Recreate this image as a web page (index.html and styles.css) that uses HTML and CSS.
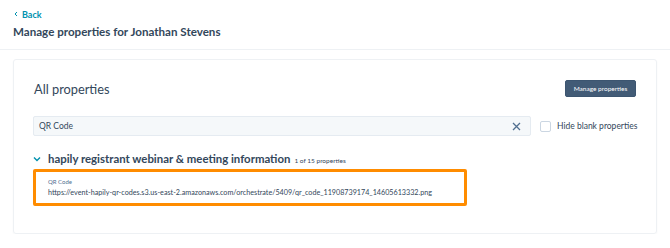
FILE: index.html
```html
<!DOCTYPE html>
<html lang="en">
<head>
    <meta charset="UTF-8">
    <meta name="viewport" content="width=device-width, initial-scale=1.0">
    <title>Manage properties</title>
    <link rel="stylesheet" href="styles.css">
</head>
<body>
    <header class="page-header">
        <a class="back-link" href="#">
            <svg width="6" height="6" viewBox="0 0 6 6"><path d="M4 1 L2 3 L4 5" fill="none" stroke="#0091ae" stroke-width="1"/></svg>
            Back
        </a>
        <h1>Manage properties for Jonathan Stevens</h1>
    </header>

    <main class="content">
        <div class="card">
            <div class="card-top">
                <h2>All properties</h2>
                <button class="btn-dark">Manage properties</button>
            </div>

            <div class="search-row">
                <div class="search-box">
                    <span>QR Code</span>
                    <svg width="9" height="9" viewBox="0 0 9 9"><path d="M1 1 L8 8 M8 1 L1 8" stroke="#516f90" stroke-width="1.3"/></svg>
                </div>
                <label class="hide-blank">
                    <span class="checkbox"></span>
                    Hide blank properties
                </label>
            </div>

            <div class="group-title">
                <svg width="8" height="6" viewBox="0 0 8 6"><path d="M1 1.5 L4 4.5 L7 1.5" fill="none" stroke="#0091ae" stroke-width="1.4"/></svg>
                <h3>hapily registrant webinar &amp; meeting information</h3>
                <span class="count">1 of 15 properties</span>
            </div>

            <div class="property highlight">
                <div class="prop-label">QR Code</div>
                <div class="prop-value">https://event-hapily-qr-codes.s3.us-east-2.amazonaws.com/orchestrate/5409/qr_code_11908739174_14605613332.png</div>
            </div>
        </div>
    </main>
</body>
</html>
```

FILE: styles.css
```css
body {
    font-family: Lato, 'Noto Sans', sans-serif;
    color: #33475b;
    background-color: #ffffff;
    margin: 0;
    padding: 0;
}

.page-header {
    padding: 9px 13px 0;
    height: 40px;
    border-bottom: 1px solid #eef1f4;
}

.back-link {
    display: flex;
    align-items: center;
    gap: 3px;
    color: #0091ae;
    font-size: 9px;
    font-weight: bold;
    text-decoration: none;
    height: 10px;
}

.page-header h1 {
    font-size: 11.6px;
    font-weight: bold;
    margin: 6px 0 0;
    color: #33475b;
}

.content {
    padding: 9px 13px 0;
}

.card {
    border: 1px solid #eef1f4;
    border-radius: 3px;
    box-shadow: 0 1px 2px rgba(0, 0, 0, 0.04);
    padding: 0 19px;
    height: 173px;
}

.card-top {
    display: flex;
    justify-content: space-between;
    align-items: center;
    height: 56px;
}

.card-top h2 {
    font-size: 12.8px;
    font-weight: normal;
    margin: 0 0 0 1px;
    padding-top: 1px;
}

.btn-dark {
    background-color: #425b76;
    color: #ffffff;
    border: 1px solid #3c5570;
    border-radius: 2px;
    font-family: inherit;
    font-size: 6.5px;
    width: 71px;
    height: 17px;
    padding: 0;
    margin-right: 1px;
}

.search-row {
    display: flex;
    align-items: center;
    height: 20px;
}

.search-box {
    flex-shrink: 0;
    height: 18px;
    background-color: #f5f8fa;
    border: 1px solid #e5ebf1;
    border-radius: 2px;
    display: flex;
    justify-content: space-between;
    align-items: center;
    padding: 0 9px 0 5px;
    width: 482px;
    font-size: 8.5px;
}

.hide-blank {
    display: flex;
    align-items: center;
    gap: 6px;
    margin-left: 9px;
    font-size: 8.5px;
    white-space: nowrap;
    color: #33475b;
}

.checkbox {
    width: 9px;
    height: 9px;
    border: 1px solid #cbd6e2;
    border-radius: 2px;
    background-color: #ffffff;
}

.group-title {
    display: flex;
    align-items: baseline;
    margin-top: 16px;
    height: 14px;
}

.group-title svg {
    margin: 0 7px 0 0;
    align-self: center;
}

.group-title h3 {
    font-size: 11.4px;
    font-weight: bold;
    margin: 0 4px 0 0;
}

.count {
    font-size: 6.5px;
}

.property {
    margin-top: 3px;
    width: 416px;
    height: 25px;
    padding: 6px 0 0 12px;
}

.highlight {
    border: 3px solid #ff8c00;
    border-radius: 2px;
}

.prop-label {
    font-size: 6px;
    color: #516f90;
}

.prop-value {
    font-size: 7.2px;
    margin-top: 3px;
}
```
